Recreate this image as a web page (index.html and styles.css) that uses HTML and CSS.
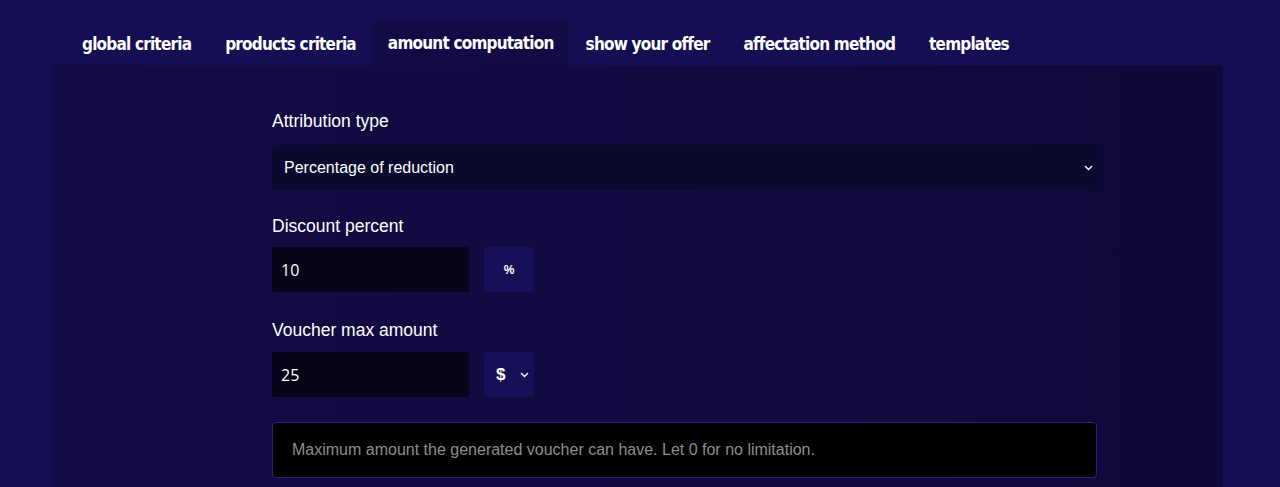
FILE: index.html
```html
<!DOCTYPE html>
<html lang="en">
<head>
<meta charset="utf-8">
<title>Amount computation</title>
<link rel="stylesheet" href="styles.css">
</head>
<body>
<div class="wrap">
  <nav class="tabs">
    <a class="tab">global criteria</a>
    <a class="tab">products criteria</a>
    <a class="tab active">amount computation</a>
    <a class="tab">show your offer</a>
    <a class="tab">affectation method</a>
    <a class="tab">templates</a>
  </nav>
  <section class="panel">
    <div class="form">
      <div class="group g1">
        <div class="label">Attribution type</div>
        <div class="select wide">
          <span>Percentage of reduction</span>
          <svg class="chev" width="9" height="6" viewBox="0 0 9 6"><path d="M1 1l3.5 3.5L8 1" fill="none" stroke="#fff" stroke-width="1.4"/></svg>
        </div>
      </div>
      <div class="group g2">
        <div class="label">Discount percent</div>
        <div class="row">
          <input class="input" type="text" value="10">
          <div class="addon">%</div>
        </div>
      </div>
      <div class="group g3">
        <div class="label">Voucher max amount</div>
        <div class="row">
          <input class="input" type="text" value="25">
          <div class="addon cur"><span>$</span>
            <svg class="chev" width="9" height="6" viewBox="0 0 9 6"><path d="M1 1l3.5 3.5L8 1" fill="none" stroke="#fff" stroke-width="1.4"/></svg>
          </div>
        </div>
      </div>
      <div class="info">Maximum amount the generated voucher can have. Let 0 for no limitation.</div>
    </div>
  </section>
</div>
</body>
</html>
```
FILE: styles.css
```css
html, body {
  margin: 0;
  padding: 0;
  height: 100%;
}
body {
  background: #150e52;
  font-family: "Liberation Sans", Arial, sans-serif;
  color: #fff;
  overflow: hidden;
}
.wrap {
  margin-left: 51px;
  width: 1172px;
  padding-top: 21px;
}
.tabs {
  display: flex;
  padding-left: 14px;
  height: 44px;
}
.tab {
  display: flex;
  align-items: center;
  padding: 1px 17px 0;
  font-family: "DejaVu Sans Condensed", "DejaVu Sans", sans-serif;
  font-weight: bold;
  font-size: 17px;
  letter-spacing: -0.8px;
  color: #fff;
  border-radius: 3px 3px 0 0;
}
.tab.active {
  background: #120b45;
  padding: 0 15px 1px;
}
.panel {
  background: linear-gradient(90deg, #120b44 0%, #110a3f 60%, #0f0939 100%);
  border-radius: 4px 4px 0 0;
  padding: 45px 0 40px 221px;
  min-height: 400px;
}
.form {
  width: 825px;
}
.label {
  font-size: 17.5px;
  line-height: 20px;
  padding-top: 1px;
  height: 20px;
  box-sizing: border-box;
  color: #fff;
}
.g1 .label { margin-bottom: 15px; }
.g2 { margin-top: 25px; }
.g2 .label { margin-bottom: 12px; }
.g3 { margin-top: 27px; }
.g3 .label { margin-bottom: 13px; }
.select {
  height: 45px;
  box-sizing: border-box;
  display: flex;
  align-items: center;
  justify-content: space-between;
  background: #0c092e;
  border-radius: 4px;
  font-size: 16px;
  padding: 0 4px 0 12px;
}
.row {
  display: flex;
  gap: 15px;
}
.input {
  width: 197px;
  height: 45px;
  box-sizing: border-box;
  border: none;
  outline: none;
  border-radius: 3px;
  background: #060318;
  color: #fff;
  font-family: "Open Sans", sans-serif;
  font-size: 16px;
  padding: 0 9px;
  margin: 0;
}
.addon {
  width: 50px;
  height: 45px;
  box-sizing: border-box;
  background: #170f58;
  border-radius: 3px;
  display: flex;
  align-items: center;
  justify-content: center;
  font-size: 12px;
  font-weight: bold;
}
.addon.cur {
  justify-content: space-between;
  padding: 0 5px 0 12px;
  font-size: 17px;
}
.chev { display: block; }
.info {
  margin-top: 25px;
  height: 56px;
  box-sizing: border-box;
  background: #000;
  border: 1px solid #2a2374;
  border-radius: 4px;
  display: flex;
  align-items: center;
  padding: 0 19px;
  font-size: 16px;
  color: #8d8d8d;
}
```
